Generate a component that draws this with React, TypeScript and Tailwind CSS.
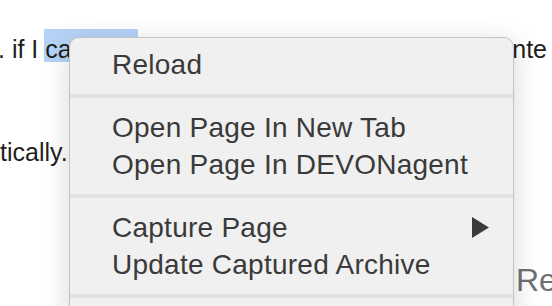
import React from "react";

const Item = ({ label, arrow }: { label: string; arrow?: boolean }) => (
  <div className="flex h-[37px] items-center justify-between pl-[42px] pr-[24px] text-[28px] leading-none tracking-[0.25px] text-[#3a3a3a]">
    <span>{label}</span>
    {arrow && (
      <svg width="17" height="21" viewBox="0 0 17 21">
        <polygon points="0,0 17,10.5 0,21" fill="#3a3a3a" />
      </svg>
    )}
  </div>
);

const Sep = () => <div className="my-[11px] h-[4px] bg-[#e2e2e2]" />;

export default function App() {
  return (
    <div
      className="relative h-[306px] w-[552px] overflow-hidden bg-white"
      style={{ fontFamily: '"Liberation Sans", Arial, sans-serif' }}
    >
      <div className="pt-[34px] text-[25px] leading-[30px] text-[#1e1e1e] whitespace-nowrap">
        <div className="flex ml-[-2px]">
          <span className="shrink-0 whitespace-pre">. if I </span>
          <span className="relative inline-block w-[94px] shrink-0 ml-[-1px] pl-[1px]">
            <span className="absolute left-0 top-[-5px] h-[33px] w-[94px] bg-[#b4d3f7]" />
            <span className="relative">ca</span>
          </span>
          <span className="inline-block w-[374px] shrink-0" />
          <span className="shrink-0">nte</span>
        </div>
        <div className="mt-[73px]">tically.</div>
        <div className="mt-[95px] pl-[516px] text-[32px] leading-[36px] text-[#707070]">Re</div>
      </div>

      <div className="absolute left-[69px] top-[37px] w-[445px] rounded-t-[10px] border border-[#c4c4c4] bg-[#f0f0f0] pt-[8px] shadow-[0_6px_28px_rgba(0,0,0,0.16)]">
        <Item label="Reload" />
        <Sep />
        <Item label="Open Page In New Tab" />
        <Item label="Open Page In DEVONagent" />
        <Sep />
        <Item label="Capture Page" arrow />
        <Item label="Update Captured Archive" />
        <Sep />
        <Item label="Copy Page Link" />
      </div>
    </div>
  );
}
